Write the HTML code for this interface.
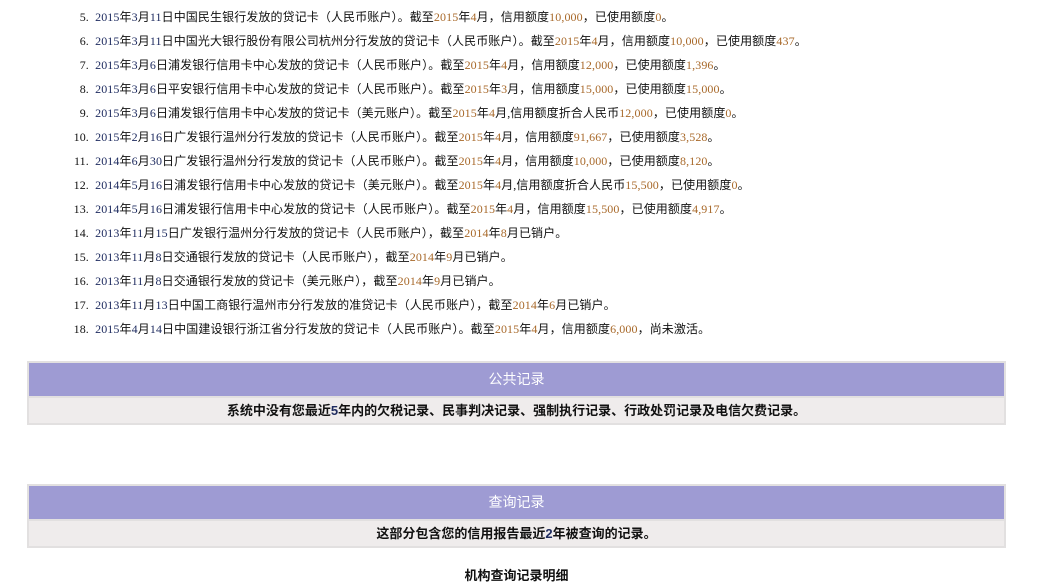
<html><head><style>
body{margin:0;background:#fff;font-family:"Liberation Serif","Noto Sans CJK SC",serif;font-size:12px;color:#111;}
.l{position:absolute;left:0;white-space:nowrap;letter-spacing:0.1px;}
.n{display:inline-block;width:92px;text-align:right;}
.o{color:#a8692a}.b{color:#1f2c60}
.box{position:absolute;left:27px;width:975px;border:2px solid #e2e0e0;}
.h{background:#9e9bd3;color:#fff;text-align:center;font-size:14px;height:33px;line-height:33px;font-family:"Liberation Sans","Noto Sans CJK SC",sans-serif;}
.s{background:#efecec;text-align:center;font-weight:bold;font-size:13px;height:25px;line-height:25px;border-top:2px solid #e2e0e0;font-family:"Liberation Sans","Noto Sans CJK SC",sans-serif;}
</style></head><body>
<div class="l" style="top:8px"><span class="n">5.&nbsp;</span> <span class="b">2015</span>年<span class="b">3</span>月<span class="b">11</span>日中国民生银行发放的贷记卡（人民币账户）。截至<span class="o">2015</span>年<span class="o">4</span>月，信用额度<span class="o">10,000</span>，已使用额度<span class="o">0</span>。</div>
<div class="l" style="top:32px"><span class="n">6.&nbsp;</span> <span class="b">2015</span>年<span class="b">3</span>月<span class="b">11</span>日中国光大银行股份有限公司杭州分行发放的贷记卡（人民币账户）。截至<span class="o">2015</span>年<span class="o">4</span>月，信用额度<span class="o">10,000</span>，已使用额度<span class="o">437</span>。</div>
<div class="l" style="top:56px"><span class="n">7.&nbsp;</span> <span class="b">2015</span>年<span class="b">3</span>月<span class="b">6</span>日浦发银行信用卡中心发放的贷记卡（人民币账户）。截至<span class="o">2015</span>年<span class="o">4</span>月，信用额度<span class="o">12,000</span>，已使用额度<span class="o">1,396</span>。</div>
<div class="l" style="top:80px"><span class="n">8.&nbsp;</span> <span class="b">2015</span>年<span class="b">3</span>月<span class="b">6</span>日平安银行信用卡中心发放的贷记卡（人民币账户）。截至<span class="o">2015</span>年<span class="o">3</span>月，信用额度<span class="o">15,000</span>，已使用额度<span class="o">15,000</span>。</div>
<div class="l" style="top:104px"><span class="n">9.&nbsp;</span> <span class="b">2015</span>年<span class="b">3</span>月<span class="b">6</span>日浦发银行信用卡中心发放的贷记卡（美元账户）。截至<span class="o">2015</span>年<span class="o">4</span>月,信用额度折合人民币<span class="o">12,000</span>，已使用额度<span class="o">0</span>。</div>
<div class="l" style="top:128px"><span class="n">10.&nbsp;</span> <span class="b">2015</span>年<span class="b">2</span>月<span class="b">16</span>日广发银行温州分行发放的贷记卡（人民币账户）。截至<span class="o">2015</span>年<span class="o">4</span>月，信用额度<span class="o">91,667</span>，已使用额度<span class="o">3,528</span>。</div>
<div class="l" style="top:152px"><span class="n">11.&nbsp;</span> <span class="b">2014</span>年<span class="b">6</span>月<span class="b">30</span>日广发银行温州分行发放的贷记卡（人民币账户）。截至<span class="o">2015</span>年<span class="o">4</span>月，信用额度<span class="o">10,000</span>，已使用额度<span class="o">8,120</span>。</div>
<div class="l" style="top:176px"><span class="n">12.&nbsp;</span> <span class="b">2014</span>年<span class="b">5</span>月<span class="b">16</span>日浦发银行信用卡中心发放的贷记卡（美元账户）。截至<span class="o">2015</span>年<span class="o">4</span>月,信用额度折合人民币<span class="o">15,500</span>，已使用额度<span class="o">0</span>。</div>
<div class="l" style="top:200px"><span class="n">13.&nbsp;</span> <span class="b">2014</span>年<span class="b">5</span>月<span class="b">16</span>日浦发银行信用卡中心发放的贷记卡（人民币账户）。截至<span class="o">2015</span>年<span class="o">4</span>月，信用额度<span class="o">15,500</span>，已使用额度<span class="o">4,917</span>。</div>
<div class="l" style="top:224px"><span class="n">14.&nbsp;</span> <span class="b">2013</span>年<span class="b">11</span>月<span class="b">15</span>日广发银行温州分行发放的贷记卡（人民币账户），截至<span class="o">2014</span>年<span class="o">8</span>月已销户。</div>
<div class="l" style="top:248px"><span class="n">15.&nbsp;</span> <span class="b">2013</span>年<span class="b">11</span>月<span class="b">8</span>日交通银行发放的贷记卡（人民币账户），截至<span class="o">2014</span>年<span class="o">9</span>月已销户。</div>
<div class="l" style="top:272px"><span class="n">16.&nbsp;</span> <span class="b">2013</span>年<span class="b">11</span>月<span class="b">8</span>日交通银行发放的贷记卡（美元账户），截至<span class="o">2014</span>年<span class="o">9</span>月已销户。</div>
<div class="l" style="top:296px"><span class="n">17.&nbsp;</span> <span class="b">2013</span>年<span class="b">11</span>月<span class="b">13</span>日中国工商银行温州市分行发放的准贷记卡（人民币账户），截至<span class="o">2014</span>年<span class="o">6</span>月已销户。</div>
<div class="l" style="top:320px"><span class="n">18.&nbsp;</span> <span class="b">2015</span>年<span class="b">4</span>月<span class="b">14</span>日中国建设银行浙江省分行发放的贷记卡（人民币账户）。截至<span class="o">2015</span>年<span class="o">4</span>月，信用额度<span class="o">6,000</span>，尚未激活。</div>
<div class="box" style="top:361px"><div class="h">公共记录</div><div class="s">系统中没有您最近<span class="b">5</span>年内的欠税记录、民事判决记录、强制执行记录、行政处罚记录及电信欠费记录。</div></div>
<div class="box" style="top:484px"><div class="h">查询记录</div><div class="s">这部分包含您的信用报告最近<span class="b">2</span>年被查询的记录。</div></div>
<div style="position:absolute;top:565px;left:0;width:1033px;text-align:center;font-weight:bold;font-size:13px;font-family:'Liberation Sans','Noto Sans CJK SC',sans-serif;">机构查询记录明细</div>
</body></html>
